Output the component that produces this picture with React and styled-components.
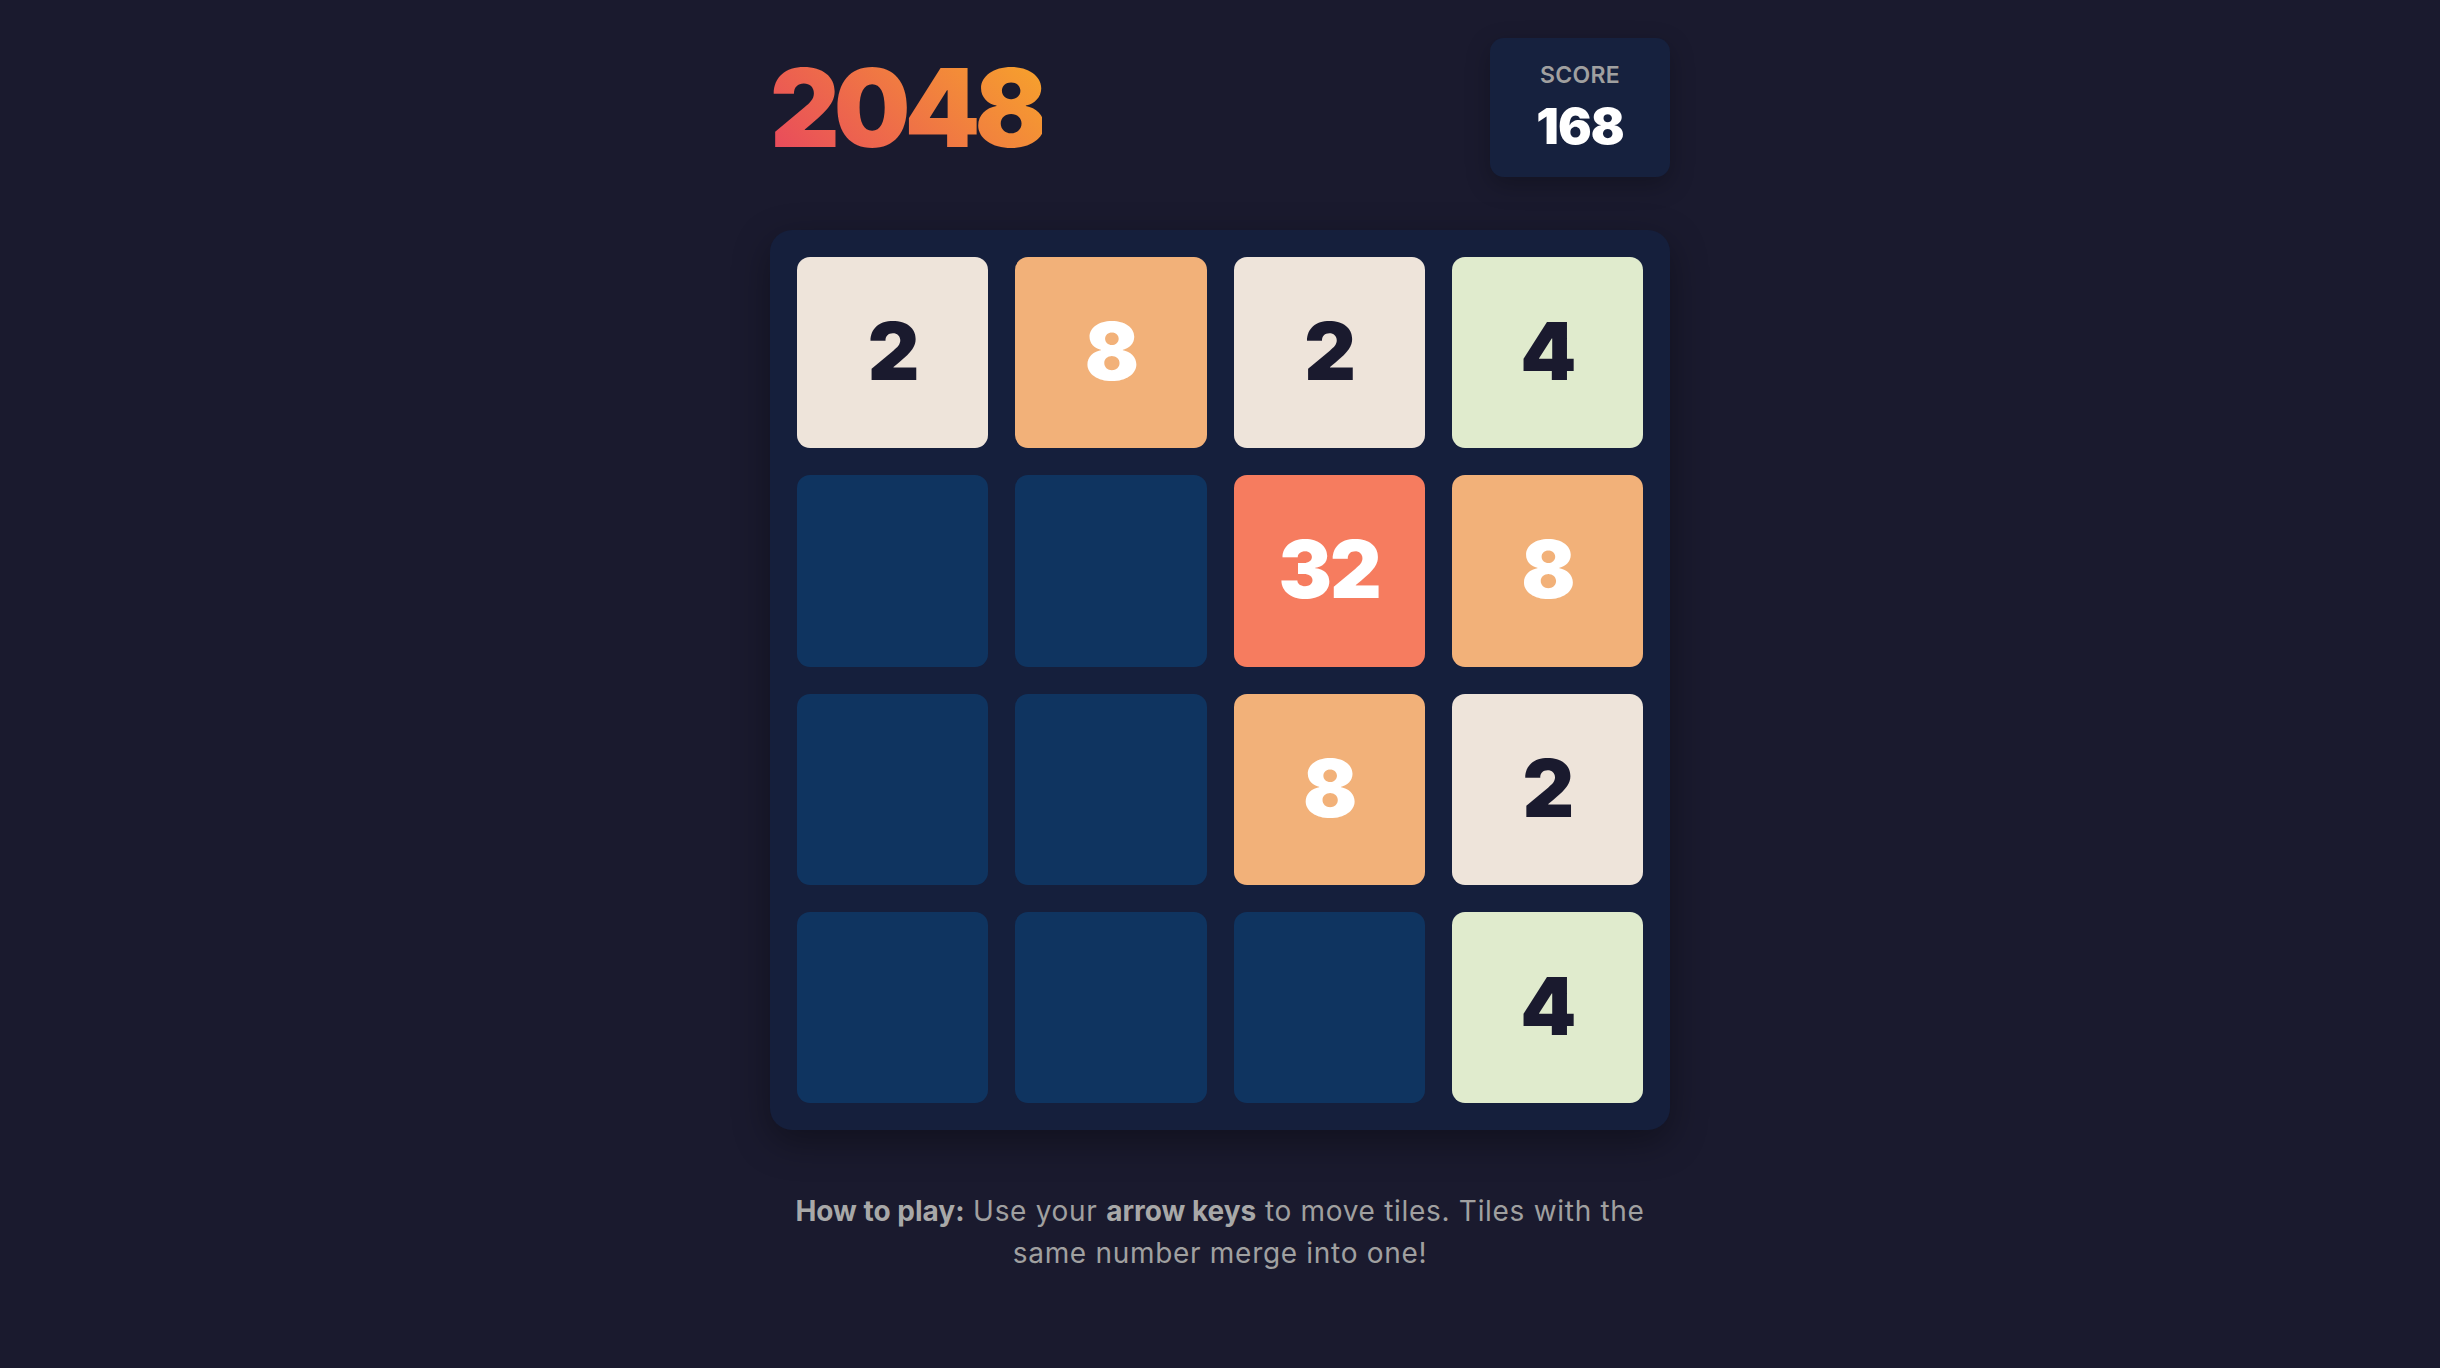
import React from 'react';
import styled, { createGlobalStyle } from 'styled-components';

const GlobalStyle = createGlobalStyle`
  body {
    margin: 0;
    background-color: #1a1a2e;
    font-family: Inter, "Liberation Sans", sans-serif;
  }
`;

const Page = styled.div`
  min-height: 100vh;
  display: flex;
  flex-direction: column;
  align-items: center;
  padding-top: 38px;
  box-sizing: border-box;
`;

const Header = styled.header`
  width: 900px;
  display: flex;
  justify-content: space-between;
  align-items: center;
`;

const Title = styled.h1`
  margin: 0;
  font-size: 108px;
  font-weight: 900;
  line-height: 1;
  letter-spacing: -6px;
  background: linear-gradient(45deg, #e8475e, #f7a52a);
  -webkit-background-clip: text;
  background-clip: text;
  color: transparent;
`;

const ScoreBox = styled.div`
  width: 180px;
  height: 139px;
  background-color: #16213e;
  border-radius: 14px;
  box-shadow: 0 8px 24px rgba(0, 0, 0, 0.25);
  display: flex;
  flex-direction: column;
  align-items: center;
  justify-content: center;
  gap: 14px;

  .label {
    font-size: 23px;
    font-weight: 600;
    color: #a0a0a0;
    letter-spacing: 0.3px;
    line-height: 1;
  }
  .value {
    font-size: 50px;
    font-weight: 900;
    color: #fff;
    line-height: 1;
    letter-spacing: -1px;
  }
`;

const Board = styled.div`
  margin-top: 53px;
  width: 900px;
  box-sizing: border-box;
  padding: 27px;
  display: grid;
  grid-template-columns: repeat(4, 1fr);
  gap: 27px;
  background-color: #151f3c;
  border-radius: 22px;
  box-shadow: 0 12px 36px rgba(0, 0, 0, 0.35);
`;

const tileColors = {
  0: { bg: '#0f3460', fg: 'transparent' },
  2: { bg: '#eee4da', fg: '#1a1a2e' },
  4: { bg: '#e0ebcd', fg: '#1a1a2e' },
  8: { bg: '#f2b179', fg: '#ffffff' },
  16: { bg: '#f59563', fg: '#ffffff' },
  32: { bg: '#f67c5f', fg: '#ffffff' },
};

const Tile = styled.div`
  aspect-ratio: 1;
  border-radius: 13px;
  background-color: ${(p) => tileColors[p.$value].bg};
  color: ${(p) => tileColors[p.$value].fg};
  display: flex;
  align-items: center;
  justify-content: center;
  font-size: 80px;
  font-weight: 900;
  letter-spacing: -2px;
  padding-bottom: 4px;
  box-sizing: border-box;
`;

const Help = styled.p`
  margin: 60px 0 0;
  max-width: 900px;
  text-align: center;
  font-size: 28px;
  line-height: 1.5;
  letter-spacing: 0.7px;
  color: #a0a0a0;
  font-weight: 400;

  strong {
    font-weight: 700;
    color: #a8a8a8;
    letter-spacing: 0;
  }
`;

const grid = [
  [2, 8, 2, 4],
  [0, 0, 32, 8],
  [0, 0, 8, 2],
  [0, 0, 0, 4],
];

export default function App() {
  return (
    <>
      <GlobalStyle />
      <Page>
        <Header>
          <Title>2048</Title>
          <ScoreBox>
            <span className='label'>SCORE</span>
            <span className='value'>168</span>
          </ScoreBox>
        </Header>
        <Board>
          {grid.flat().map((v, i) => (
            <Tile key={i} $value={v}>{v > 0 ? v : ''}</Tile>
          ))}
        </Board>
        <Help>
          <strong>How to play:</strong> Use your <strong>arrow keys</strong> to move tiles. Tiles with the same number merge into one!
        </Help>
      </Page>
    </>
  );
}
